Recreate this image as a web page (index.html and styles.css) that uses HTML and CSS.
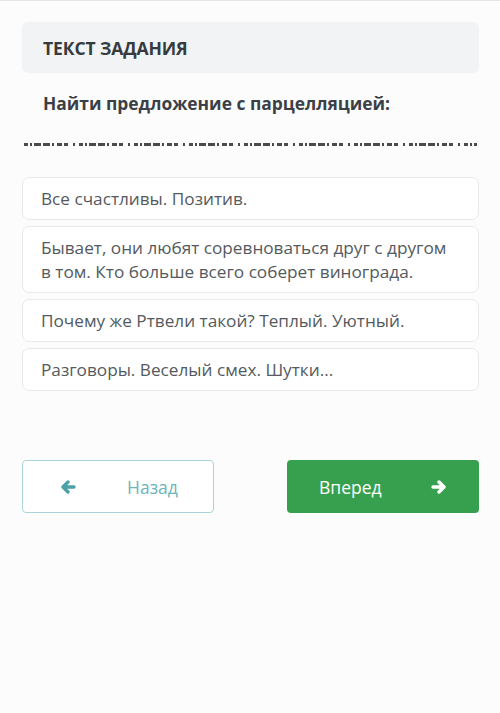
FILE: index.html
```html
<!DOCTYPE html>
<html lang="ru">
<head>
  <meta charset="UTF-8">
  <meta name="viewport" content="width=device-width, initial-scale=1.0">
  <title>Текст задания</title>
  <link rel="stylesheet" href="styles.css">
</head>
<body>
<div class="page">
  <div class="task-head">ТЕКСТ ЗАДАНИЯ</div>
  <div class="task-question">Найти предложение с парцелляцией:</div>
  <div class="cut-line"></div>

  <div class="options">
    <div class="option">Все счастливы. Позитив.</div>
    <div class="option">Бывает, они любят соревноваться друг с другом в том. Кто больше всего соберет винограда.</div>
    <div class="option">Почему же Ртвели такой? Теплый. Уютный.</div>
    <div class="option">Разговоры. Веселый смех. Шутки...</div>
  </div>

  <div class="nav">
    <button class="btn btn-back" type="button">
      <svg class="arrow" viewBox="0 0 16 14" width="16" height="14">
        <path d="M14 7H3M8 2L3 7l5 5" fill="none" stroke="currentColor" stroke-width="3.4" stroke-linecap="round" stroke-linejoin="round"/>
      </svg>
      <span>Назад</span>
    </button>
    <button class="btn btn-next" type="button">
      <span>Вперед</span>
      <svg class="arrow" viewBox="0 0 16 14" width="16" height="14">
        <path d="M2 7h11M8 2l5 5-5 5" fill="none" stroke="currentColor" stroke-width="3.4" stroke-linecap="round" stroke-linejoin="round"/>
      </svg>
    </button>
  </div>
</div>
</body>
</html>
```

FILE: styles.css
```css
body {
  margin: 0;
  background-color: #fcfcfc;
  border-top: 1px solid #e6e6e6;
  font-family: "Open Sans", "Noto Sans", sans-serif;
  color: #3b4046;
}
.page {
  padding: 21px 21px 0 22px;
}
.task-head {
  background: #f1f3f4;
  border-radius: 6px;
  height: 51px;
  display: flex;
  align-items: center;
  padding-left: 21px;
  font-size: 17.5px;
  font-weight: 700;
  letter-spacing: -0.1px;
  color: #363b40;
}
.task-question {
  margin-top: 17px;
  padding-left: 21px;
  font-size: 17.4px;
  font-weight: 700;
  line-height: 26px;
}
.cut-line {
  margin: 27px 2px 0 2px;
  height: 3px;
  background: repeating-linear-gradient(90deg,
    #4a4a4a 0 4px, transparent 4px 6px,
    #4a4a4a 6px 8px, transparent 8px 10px,
    #4a4a4a 10px 17px, transparent 17px 19px,
    #4a4a4a 19px 26px, transparent 26px 28px,
    #4a4a4a 28px 30px, transparent 30px 33px,
    #4a4a4a 33px 38px, transparent 38px 40px,
    #4a4a4a 40px 44px, transparent 44px 49px,
    #4a4a4a 49px 51px, transparent 51px 55px);
}
.options {
  margin-top: 31px;
  display: flex;
  flex-direction: column;
  gap: 6px;
}
.option {
  background: #fff;
  border: 1px solid #e9e9e9;
  border-radius: 7px;
  padding: 9px 18px 8px;
  font-size: 17.2px;
  line-height: 24px;
  color: #545a60;
}
.nav {
  margin-top: 69px;
  display: flex;
  justify-content: space-between;
}
.btn {
  width: 192px;
  height: 53px;
  border-radius: 4px;
  font-family: "Open Sans", "Noto Sans", sans-serif;
  font-size: 17.5px;
  display: flex;
  align-items: center;
  cursor: pointer;
}
.btn-back {
  background: #fff;
  border: 1px solid #a9d3d7;
  color: #6eb5bc;
  padding: 0 0 0 37px;
  gap: 51px;
}
.btn-back .arrow {
  color: #4aa1a8;
}
.btn-next {
  background: #37a04f;
  border: none;
  color: #fff;
  padding: 0 0 0 32px;
  gap: 49px;
}
```
